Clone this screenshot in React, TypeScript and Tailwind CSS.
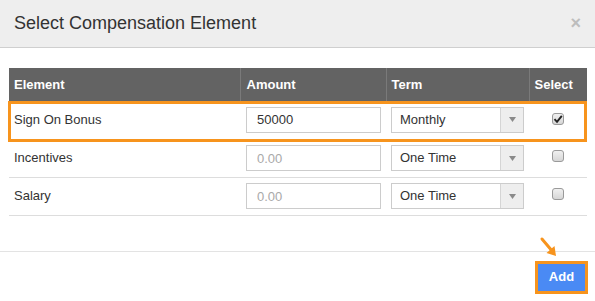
const rows = [
  { name: "Sign On Bonus", amount: "50000", term: "Monthly", checked: true },
  { name: "Incentives", amount: "", term: "One Time", checked: false },
  { name: "Salary", amount: "", term: "One Time", checked: false },
];

function CheckBox({ checked }: { checked: boolean }) {
  return (
    <span className="inline-flex h-[12px] w-[12px] items-center justify-center rounded-[3px] border border-[#9a9a9a] bg-gradient-to-b from-[#f0f0f0] to-[#d6d6d6]">
      {checked && (
        <svg width="10" height="10" viewBox="0 0 10 10">
          <path d="M1.5 5.2 L4 7.8 L8.8 1.8" fill="none" stroke="#222" strokeWidth="1.9" />
        </svg>
      )}
    </span>
  );
}

export default function App() {
  return (
    <main
      className="relative h-[301px] w-[595px] overflow-hidden bg-white text-[#333]"
      style={{ fontFamily: '"Liberation Sans", Arial, sans-serif' }}
    >
      {/* Header */}
      <div className="flex h-[48px] items-center justify-between border-b border-[#cfcfcf] bg-[#eeeeee] pb-[1px] pl-[14px] pr-[14px]">
        <h1 className="text-[18px] text-[#333]">Select Compensation Element</h1>
        <span className="text-[18px] font-bold leading-none text-[#bdbdbd]">×</span>
      </div>

      {/* Table */}
      <div className="relative ml-[9px] mr-[8px] mt-[20px]">
        <table className="w-full table-fixed border-collapse text-[13px]">
          <colgroup>
            <col className="w-[231px]" />
            <col className="w-[146px]" />
            <col className="w-[143px]" />
            <col className="w-[58px]" />
          </colgroup>
          <thead>
            <tr className="h-[33px] bg-[#636363] text-left font-bold text-white">
              <th className="border-r border-[#7a7a7a] pl-[5px]">Element</th>
              <th className="border-r border-[#7a7a7a] pl-[6px]">Amount</th>
              <th className="border-r border-[#7a7a7a] pl-[5px]">Term</th>
              <th className="pl-[5px]">Select</th>
            </tr>
          </thead>
          <tbody>
            {rows.map((r) => (
              <tr key={r.name} className="h-[38px] border-b border-[#dddddd]">
                <td className="pl-[5px] align-middle">{r.name}</td>
                <td className="pl-[6px]">
                  <input
                    readOnly
                    value={r.amount}
                    placeholder="0.00"
                    className="h-[26px] w-[135px] border border-[#cccccc] pl-[10px] text-[13px] text-[#333] placeholder:text-[#a9a9a9] focus:outline-none"
                  />
                </td>
                <td className="pl-[5px]">
                  <div className="flex h-[26px] w-[133px] border border-[#cccccc]">
                    <span className="flex flex-1 items-center pl-[8px]">{r.term}</span>
                    <span className="flex w-[23px] items-center justify-center border-l border-[#d5d5d5] bg-[#eeeeee]">
                      <svg width="7" height="5" viewBox="0 0 7 5">
                        <path d="M0 0 H7 L3.5 5 Z" fill="#8a8a8a" />
                      </svg>
                    </span>
                  </div>
                </td>
                <td className="text-center">
                  <CheckBox checked={r.checked} />
                </td>
              </tr>
            ))}
          </tbody>
        </table>
        {/* highlighted row */}
        <div className="pointer-events-none absolute left-[-1px] top-[33px] h-[41px] w-[579px] border-[3px] border-[#f7941d]" />
      </div>

      {/* Footer */}
      <div className="mt-[35px] flex justify-end border-t border-[#e3e3e3] pr-[7px] pt-[9px]">
        <button className="h-[33px] w-[53px] border-[3px] border-[#f7941d] bg-[#4a8af4] text-[13px] font-bold text-white">
          Add
        </button>
      </div>

      {/* pointer arrow */}
      <svg className="absolute left-[538px] top-[236px]" width="22" height="22" viewBox="0 0 22 22">
        <path d="M4 3 L15 16" stroke="#f7941d" strokeWidth="3" strokeLinecap="round" />
        <path d="M18 20 L8.5 17 L16.5 10 Z" fill="#f7941d" />
      </svg>
    </main>
  );
}
